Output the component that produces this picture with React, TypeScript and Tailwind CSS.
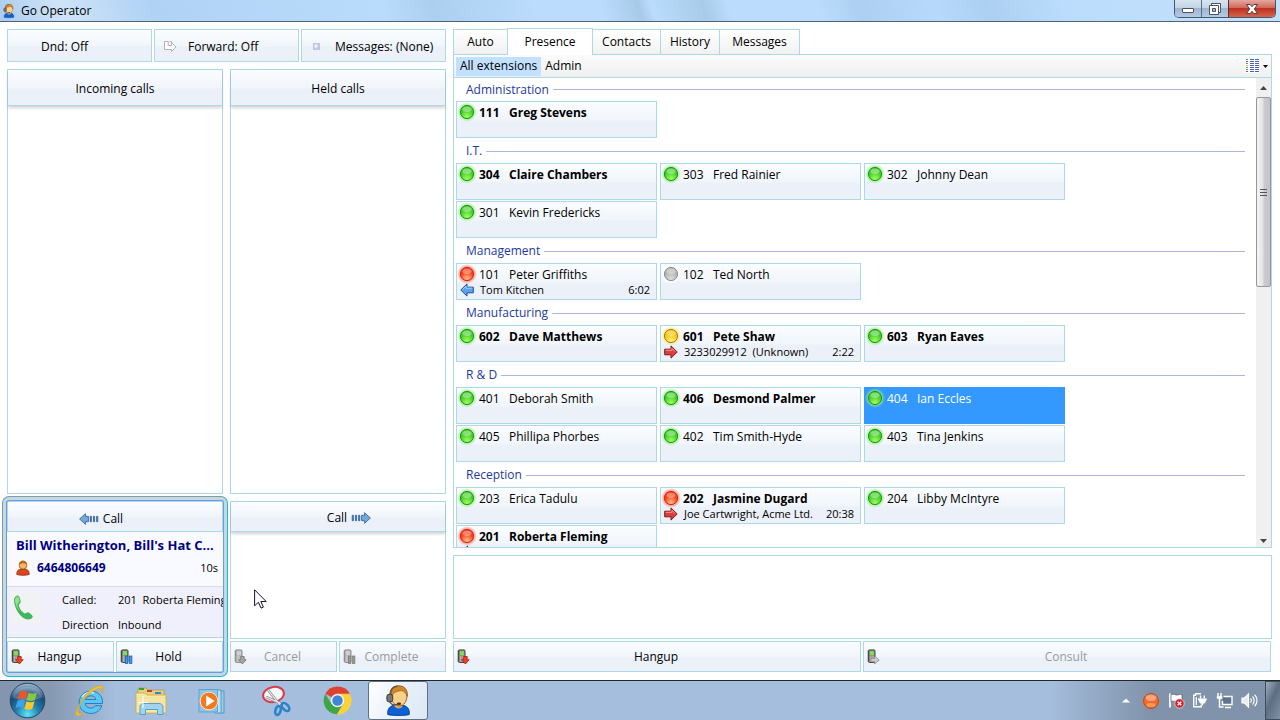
import { useId, useState, type ReactNode } from "react";

type Status = "green" | "red" | "yellow" | "grey";

interface CallInfo {
  direction: "in" | "out";
  party: string;
  time?: string;
}

interface Extension {
  ext: string;
  name: string;
  status: Status;
  bold?: boolean;
  call?: CallInfo;
}

interface Group {
  title: string;
  members: Extension[];
}

const groups: Group[] = [
  { title: "Administration", members: [{ ext: "111", name: "Greg Stevens", status: "green", bold: true }] },
  {
    title: "I.T.",
    members: [
      { ext: "304", name: "Claire Chambers", status: "green", bold: true },
      { ext: "303", name: "Fred Rainier", status: "green" },
      { ext: "302", name: "Johnny Dean", status: "green" },
      { ext: "301", name: "Kevin Fredericks", status: "green" },
    ],
  },
  {
    title: "Management",
    members: [
      { ext: "101", name: "Peter Griffiths", status: "red", call: { direction: "in", party: "Tom Kitchen", time: "6:02" } },
      { ext: "102", name: "Ted North", status: "grey" },
    ],
  },
  {
    title: "Manufacturing",
    members: [
      { ext: "602", name: "Dave Matthews", status: "green", bold: true },
      { ext: "601", name: "Pete Shaw", status: "yellow", bold: true, call: { direction: "out", party: "3233029912  (Unknown)", time: "2:22" } },
      { ext: "603", name: "Ryan Eaves", status: "green", bold: true },
    ],
  },
  {
    title: "R & D",
    members: [
      { ext: "401", name: "Deborah Smith", status: "green" },
      { ext: "406", name: "Desmond Palmer", status: "green", bold: true },
      { ext: "404", name: "Ian Eccles", status: "green" },
      { ext: "405", name: "Phillipa Phorbes", status: "green" },
      { ext: "402", name: "Tim Smith-Hyde", status: "green" },
      { ext: "403", name: "Tina Jenkins", status: "green" },
    ],
  },
  {
    title: "Reception",
    members: [
      { ext: "203", name: "Erica Tadulu", status: "green" },
      { ext: "202", name: "Jasmine Dugard", status: "red", bold: true, call: { direction: "out", party: "Joe Cartwright, Acme Ltd.", time: "20:38" } },
      { ext: "204", name: "Libby McIntyre", status: "green" },
      { ext: "201", name: "Roberta Fleming", status: "red", bold: true, call: { direction: "out", party: "" } },
    ],
  },
];

const tabs = [
  { label: "Auto", width: "w-[55px]" },
  { label: "Presence", width: "w-[86px]" },
  { label: "Contacts", width: "w-[69px]" },
  { label: "History", width: "w-[60px]" },
  { label: "Messages", width: "w-[81px]" },
];

const glass = "bg-[linear-gradient(#fbfdff,#f1f6fb_48%,#ebf0f9_58%,#ebf0f9)]";

const orbColors: Record<Status, { light: string; mid: string; dark: string; glow: string }> = {
  green: { light: "#9dff5e", mid: "#45cc2c", dark: "#2b8f1f", glow: "#8ef07c" },
  red: { light: "#ffc08a", mid: "#f8401c", dark: "#cc2c16", glow: "#ff7a6c" },
  yellow: { light: "#fff08a", mid: "#fbc50a", dark: "#a87c0c", glow: "#ffe680" },
  grey: { light: "#dcdcdc", mid: "#b4b4b4", dark: "#8c8c8c", glow: "#ffffff" },
};

function Orb({ status }: { status: Status }) {
  const id = useId();
  const c = orbColors[status];
  return (
    <svg viewBox="0 0 20 20" className="size-5 shrink-0" aria-hidden="true">
      <defs>
        <radialGradient id={`${id}g`}>
          <stop offset="60%" stopColor={c.glow} />
          <stop offset="100%" stopColor={c.glow} stopOpacity="0" />
        </radialGradient>
        <radialGradient id={`${id}b`} cx="50%" cy="85%" r="70%">
          <stop offset="0" stopColor={c.light} />
          <stop offset="75%" stopColor={c.mid} />
          <stop offset="100%" stopColor={c.mid} />
        </radialGradient>
      </defs>
      <circle cx="10" cy="10" r="10" fill={`url(#${id}g)`} />
      <circle cx="10" cy="10" r="6.6" fill={`url(#${id}b)`} stroke={c.dark} />
      <ellipse cx="10" cy="7.3" rx="4.4" ry="2.6" fill="#fff" opacity=".36" />
    </svg>
  );
}

function CallArrow({ direction }: { direction: "in" | "out" }) {
  return direction === "in" ? (
    <svg viewBox="0 0 14 14" className="size-3.5 shrink-0" aria-hidden="true">
      <path d="M.8 7 7 .9v3.300h6.300v5.600H7v3.300z" fill="#58a2ee" stroke="#1d4f9c" />
      <path d="M2.600 6.700 6 3.200v2h6.300" fill="none" stroke="#a9d2fb" />
    </svg>
  ) : (
    <svg viewBox="0 0 14 14" className="size-3.5 shrink-0" aria-hidden="true">
      <path d="M13.200 7 7 .9v3.300H.7v5.600H7v3.300z" fill="#e03c3c" stroke="#7c1c1c" />
      <path d="M11.300 6.700 8 3.300v2H1.700" fill="none" stroke="#f59a92" />
    </svg>
  );
}

function StripedArrow({ left }: { left?: boolean }) {
  return (
    <svg viewBox="0 0 20 12" className="h-3 w-5" aria-hidden="true">
      <g transform={left ? undefined : "matrix(-1 0 0 1 20 0)"} fill="#4f86bf" stroke="#2f5f9b" strokeWidth=".8">
        <path d="M.6 6 6.400.7v2.600h3v5.400h-3v2.600z" fill="#74a6d8" />
        <path d="M11.200 3.300h1.200v5.400h-1.200zM14.400 3.300h1.200v5.400h-1.200zM17.600 3.300h1.200v5.400h-1.200z" />
      </g>
    </svg>
  );
}

type PhoneKind = "hangup" | "hold" | "consult";

function PhoneIcon({ kind, muted }: { kind: PhoneKind; muted?: boolean }) {
  const body = muted ? "#8d8d8d" : "#444";
  const screen = muted ? "#d0d0d0" : "#7ee04e";
  return (
    <svg viewBox="0 0 14 16" className="h-4 w-3.5 shrink-0" aria-hidden="true">
      <path d="M.6 1.500 2.300.6v13L.6 12.800z" fill={muted ? "#aaa" : "#777"} />
      <rect x="1.600" y=".9" width="6.400" height="12.600" rx="1" fill={muted ? "#b5b5b5" : "#8b8b8b"} stroke={body} />
      <rect x="3" y="2.200" width="4" height="4" fill={screen} />
      <path d="M3 8h4M3 10h4M3 12h4" stroke={muted ? "#ddd" : "#d5d5d5"} strokeDasharray="1 .6" />
      {kind === "hangup" && (
        <path d="M6.600 7.500h3.600v3.200h2l-3.800 4.300-3.800-4.300h2z" fill={muted ? "#a5a5a5" : "#f0431c"} stroke={muted ? "#777" : "#a81a0e"} strokeWidth=".8" />
      )}
      {kind === "hold" && (
        <g fill={muted ? "#999" : "#3d9af0"} stroke={muted ? "#777" : "#155aa8"} strokeWidth=".7">
          <rect x="5.500" y="7" width="2.400" height="7.600" />
          <rect x="9.500" y="7" width="2.400" height="7.600" />
        </g>
      )}
      {kind === "consult" && <path d="M4 9.300h3.600V7l4.600 4-4.600 4v-2.300H4z" fill="#ccc" stroke="#8a8a8a" strokeWidth=".8" />}
    </svg>
  );
}

function OperatorIcon({ className }: { className: string }) {
  return (
    <svg viewBox="0 0 32 32" className={className} aria-hidden="true">
      <path d="M5 30.500c-.8-6 2.500-9 7-9.500h8c4.500.5 7.800 3.500 7 9.500-4 1.200-18 1.200-22 0z" fill="#0a62d6" stroke="#06378a" />
      <path d="M12 19h8v3c-2 3-6 3-8 0z" fill="#e9a558" />
      <path d="M7.500 11C7 4 11 1.200 16 1.200S25.500 4 24.700 12c-.3 5-3.200 9.500-7.700 9.500S8 17 7.500 11z" fill="#fbd08a" stroke="#9c5d15" />
      <path d="M7.200 12C6 4 11 .8 16 .8s10 3 9 11c-1.500-4-3-5.500-6-6-4 .5-8 1-10 6.200z" fill="#cf8728" stroke="#8c5410" strokeWidth=".7" />
      <path d="M8 9C8 3 12 1.500 15 1.200" fill="none" stroke="#555" strokeWidth="1.400" />
      <rect x="4" y="9.500" width="6" height="8" rx="2.500" fill="#777" stroke="#333" />
      <path d="M7 17c1 3 4 4 8 3" fill="none" stroke="#555" strokeWidth="1.200" />
      <ellipse cx="16.500" cy="19.300" rx="2.200" ry="1.300" fill="#333" />
    </svg>
  );
}

function PersonIcon() {
  return (
    <svg viewBox="0 0 14 16" className="h-4 w-3.5 shrink-0" aria-hidden="true">
      <path d="M.8 14.500c0-4 2-5.300 4.200-5.500h4c2.200.2 4.200 1.500 4.200 5.500-3 1-9.400 1-12.400 0z" fill="#d8471b" stroke="#962a0c" strokeWidth=".8" />
      <circle cx="7" cy="5.200" r="3.900" fill="#f4b660" stroke="#a85d14" strokeWidth=".8" />
      <path d="M3 5c0-6 8-6 8 0-2-2-5-2.400-8 0z" fill="#b96a1c" />
    </svg>
  );
}

function GlassButton({ children, icon, muted }: { children: ReactNode; icon?: ReactNode; muted?: boolean }) {
  return (
    <button
      type="button"
      disabled={muted}
      className={`${glass} flex h-[31px] items-center border border-[#add8e6] px-[3px] ${muted ? "text-[#9a9a9a]" : "text-black"}`}
    >
      {icon}
      <span className="flex-1 pr-4 text-center">{children}</span>
    </button>
  );
}

function ColumnPanel({ title, className = "", headerClass = "h-9" }: { title: ReactNode; className?: string; headerClass?: string }) {
  return (
    <section className={`flex flex-col border border-[#add8e6] bg-white ${className}`}>
      <h2 className={`${glass} ${headerClass} flex shrink-0 items-center justify-center border-b border-[#add8e6] pt-0.5 shadow-[0_2px_3px_rgba(0,0,0,0.18)]`}>{title}</h2>
    </section>
  );
}

function ExtensionCard({ item, selected, onSelect }: { item: Extension; selected: boolean; onSelect: () => void }) {
  return (
    <button
      type="button"
      aria-pressed={selected}
      onClick={onSelect}
      className={`flex h-[37px] w-[201px] flex-col border text-left ${
        selected ? "border-[#3399ff] bg-[#3399ff] text-white" : `${glass} border-[#add8e6] text-black`
      }`}
    >
      <span className="flex h-5 w-full items-center">
        <Orb status={item.status} />
        <span className={`flex items-center pt-px pl-0.5 leading-4 ${item.bold ? "font-bold" : ""}`}>
          <span className="w-[30px]">{item.ext}</span>
          <span>{item.name}</span>
        </span>
      </span>
      {item.call && (
        <span className="-mt-0.5 flex h-[15px] w-full items-center pr-1.5 pl-[3px] text-[11px] leading-[15px]">
          <CallArrow direction={item.call.direction} />
          <span className="flex-1 pl-1.5 whitespace-pre">{item.call.party}</span>
          <span>{item.call.time}</span>
        </span>
      )}
    </button>
  );
}

function TitleBar() {
  return (
    <header className="flex h-[22px] shrink-0 items-start justify-between border-b border-[#52617a] bg-[linear-gradient(72deg,#a9cdf0_0%,#cfe3f7_5%,#b0d3f5_12%,#b9dbfc_30%,#accff0_34%,#bbdcfc_42%,#bbdcfc_47%,#a8cae9_50%,#bbdcfc_51%,#a8cbea_55%,#bbdcfc_57%,#bbdcfc_64%,#add0f2_67%,#b7dafc_73%,#acd0f2_77%,#bbdcfc_83%,#c4e1fb_100%)]">
      <div className="flex items-center gap-[5px] pt-[3px] pl-0.5">
        <OperatorIcon className="h-4 w-3.5" />
        <h1 className="leading-4">Go Operator</h1>
      </div>
      <div className="mr-1 flex h-[18px] overflow-hidden rounded-b-[5px] border border-t-0 border-[#46566c]">
        <button type="button" aria-label="Minimize" className="flex w-[27px] items-center justify-center border-r border-[#5d6e86] bg-[linear-gradient(#d8e6f3,#c3d4e6_45%,#9fb5cf_50%,#b4cbe6)]">
          <svg viewBox="0 0 14 14" className="mt-0.5 size-3.5"><rect x="1.500" y="5.500" width="11" height="4" rx=".5" fill="#fff" stroke="#4a5264" /></svg>
        </button>
        <button type="button" aria-label="Restore" className="flex w-[27px] items-center justify-center border-r border-[#5d2a30] bg-[linear-gradient(#d8e6f3,#c3d4e6_45%,#9fb5cf_50%,#b4cbe6)]">
          <svg viewBox="0 0 14 14" className="size-3.5" fill="#fff" stroke="#4a5264">
            <path d="M3.500 1.500h9v9h-9z" />
            <path d="M1.500 3.500h9v9h-9z" />
            <path d="M4.500 6.500h3v3h-3z" fill="#a9bdd4" />
          </svg>
        </button>
        <button type="button" aria-label="Close" className="flex w-[46px] items-center justify-center bg-[linear-gradient(#e3a9a0,#d2695a_45%,#bd3220_50%,#d5644a)]">
          <svg viewBox="0 0 14 14" className="size-3.5"><path d="M1.500 2.500h3.700L7 4.700l1.800-2.200h3.700L9.300 7l3.200 4.500H8.800L7 9.300l-1.800 2.200H1.500L4.700 7z" fill="#fff" stroke="#5a3a44" /></svg>
        </button>
      </div>
    </header>
  );
}

function ActiveCall() {
  return (
    <section className="relative flex flex-1 flex-col bg-white">
      <h2 className={`${glass} flex h-[30px] shrink-0 items-center justify-center gap-1 border border-b-0 border-[#add8e6] pt-1 pr-7`}>
        <StripedArrow left />
        Call
      </h2>
      <div className="border-y border-[#add8e6] border-b-[#d9dde4] bg-[#f8faff] px-[9px]">
        <p className="h-[27px] text-[13px] leading-[27px] font-bold whitespace-nowrap text-[#000080]">Bill Witherington, Bill's Hat C...</p>
        <div className="-mr-1 flex h-[27px] items-start pt-px">
          <PersonIcon />
          <span className="flex-1 pl-[7px] leading-4 font-bold text-[#000080]">6464806649</span>
          <span className="text-[11px] leading-4">10s</span>
        </div>
      </div>
      <div className="mb-[3px] flex h-[51px] overflow-hidden border-b border-[#add8e6] bg-[#f0f0fc] text-[11px]">
        <svg viewBox="0 0 30 32" className="mt-1 ml-1 h-8 w-[30px] shrink-0" aria-hidden="true">
          <rect width="30" height="32" fill="#f1f2f4" />
          <path d="M3 9c0-2.500 2-4.500 4-4.500 1.500.5 2.500 4 2.700 6.500-.2 1.500-1.700 1.800-2 3 .6 3.500 3 7 6 8.500 1.200.2 2-1.300 3.300-1.300 1.700.6 4.500 3 4.800 4.300-.4 2-3 3.300-5.300 3C9.500 27.500 3 17 3 9z" fill="#43b55c" />
          <path d="M4 9c.3-2 1.500-3.500 3-3.400 1 .8 1.500 3 1.600 5L6.500 13C6 15 8 19 10 21 6.500 18 4 13 4 9z" fill="#8fe38c" />
        </svg>
        <dl className="grid flex-1 auto-rows-[25px] grid-cols-[56px_1fr] pl-[21px] leading-[25px] whitespace-pre">
          <dt>Called:</dt>
          <dd>201  Roberta Fleming</dd>
          <dt>Direction</dt>
          <dd>Inbound</dd>
        </dl>
      </div>
      <div className="mt-auto grid grid-cols-2 gap-0.5">
        <GlassButton icon={<PhoneIcon kind="hangup" />}>Hangup</GlassButton>
        <GlassButton icon={<PhoneIcon kind="hold" />}>Hold</GlassButton>
      </div>
      <div className="pointer-events-none absolute -inset-[5px] rounded-[7px] border border-[#7f9cab] border-r-[#12bfd6] border-b-[#12bfd6] shadow-[inset_0_0_0_3px_#c4d8e2,inset_0_0_0_4px_#6b9ae6]" />
    </section>
  );
}

function TaskbarIcons() {
  return (
    <nav aria-label="Taskbar" className="flex h-full items-center">
      <button type="button" aria-label="Start" className="flex w-[54px] justify-center">
        <svg viewBox="0 0 38 38" className="size-[37px]">
          <defs>
            <radialGradient id="start-orb" cx="50%" cy="90%" r="85%">
              <stop offset="0" stopColor="#5fe6f5" />
              <stop offset=".4" stopColor="#1f7fae" />
              <stop offset=".75" stopColor="#1c4a73" />
              <stop offset="1" stopColor="#8fb0c9" />
            </radialGradient>
          </defs>
          <circle cx="19" cy="19" r="17.800" fill="url(#start-orb)" stroke="#27435f" />
          <path d="M4 16C6 1 32 1 34 16c-10 4-20 4-30 0z" fill="#fff" opacity=".22" />
          <path d="M11 10.500c2.500-1.600 5-1.500 8 0l-2 7.500c-3-1.400-5.500-1.400-8 0z" fill="#f0552a" />
          <path d="M20.200 11c3 1.500 5.500 1.500 8.500 0l-2.200 7.600c-3 1.400-5.500 1.400-8.300 0z" fill="#8cc63f" />
          <path d="M8.700 19.300c2.500-1.500 5-1.500 8 0l-2 7.500c-3-1.500-5.500-1.500-8 0z" fill="#3ba3e8" />
          <path d="M17.900 19.800c3 1.500 5.500 1.500 8.400 0L24 27.400c-3 1.400-5.300 1.400-8.200 0z" fill="#fcc62d" />
        </svg>
      </button>
      <a href="#internet-explorer" aria-label="Internet Explorer" className="flex w-[72px] justify-center">
        <svg viewBox="0 0 32 32" className="size-8">
          <path d="M28.500 18.500H11.200c.4 5.200 7.800 6 10 2.200h6.700C25.500 27.500 19 29.600 13.500 28 8 26.500 5 22 5.200 17 5.500 10.500 10.500 6.200 17 6.200c7.500 0 12 5 11.500 12.300zM11.400 14.500h10.500c-.7-4.800-9-5-10.500 0z" fill="#5cc6f5" stroke="#1a79bd" strokeWidth=".9" />
          <path d="M8 12c3-4.500 8-5.500 12-4" fill="none" stroke="#c5eeff" strokeWidth="1.600" />
          <path d="M5.500 20C.5 27 .8 32 6 30.400c1.500-.5 3-1.500 4.500-2.600-4 2.200-7.500 2-6.500-3C6 16 17 5.500 25 3.200c3.200-.8 4 1.400 2.600 5.300C30.500 3.500 29.500.4 25 1 18 2 9 11 5.500 20z" fill="#f6c52c" stroke="#e0a81a" strokeWidth=".8" />
        </svg>
      </a>
      <a href="#explorer" aria-label="Windows Explorer" className="flex w-[50px] justify-center">
        <svg viewBox="0 0 34 32" className="h-8 w-[34px]">
          <path d="M4 3h8l2 2h16v20H4z" fill="#e9cf7b" stroke="#b9993f" strokeWidth=".8" />
          <path d="M5 3h5v2H5z" fill="#2da23a" /><path d="M13 5h5v2h-5z" fill="#d33a23" /><path d="M21 7h6v2h-6z" fill="#2e86d9" />
          <path d="M2 8h9l2 2h19v18H2z" fill="#f7e7a5" stroke="#c7aa50" strokeWidth=".8" />
          <path d="M3 13h28M3 17h28M3 21h28" stroke="#f0dc98" />
          <path d="M6 29.500v-7c0-3 2-4 4-4h15c2.500 0 4 1.500 4 4v7h-5.500v-5h-12v5z" fill="#9fd4ee" stroke="#5a9fc6" />
          <path d="M9 11v12M4 17.500h10" stroke="#fff" />
        </svg>
      </a>
      <a href="#media-player" aria-label="Media Player" className="flex w-[72px] justify-center">
        <svg viewBox="0 0 30 28" className="h-7 w-[30px]">
          <path d="M21 4h6v22h-6z" fill="#9ccbe6" stroke="#4d9cc9" />
          <path d="M18 3h6v23h-6z" fill="#bfe0f1" stroke="#4d9cc9" />
          <rect x="2" y="2.500" width="18.500" height="22.500" fill="#8fc4e4" stroke="#5aa5cf" />
          <circle cx="12" cy="14" r="8.900" fill="#f47a20" stroke="#fde3c8" />
          <path d="M9.200 8.500 17.500 14l-8.300 5.500z" fill="#fff" />
        </svg>
      </a>
      <a href="#snipping-tool" aria-label="Snipping Tool" className="flex w-[55px] justify-center">
        <svg viewBox="0 0 32 32" className="size-8">
          <ellipse cx="13.500" cy="9.500" rx="10.500" ry="7.500" fill="#f8f8fa" stroke="#d83c46" strokeWidth="2" transform="rotate(-12 13.500 9.500)" />
          <path d="M8 5l12 15M6 12l16 7" stroke="#8a9099" strokeWidth="2.600" />
          <path d="M8 5l12 15M6 12l16 7" stroke="#e8ecf0" strokeWidth="1.200" />
          <ellipse cx="18" cy="25.500" rx="2.600" ry="4.500" fill="none" stroke="#2d83c9" strokeWidth="2.600" transform="rotate(15 18 25.500)" />
          <ellipse cx="25.500" cy="22" rx="4.800" ry="2.800" fill="none" stroke="#2d83c9" strokeWidth="2.600" transform="rotate(48 25.500 22)" />
        </svg>
      </a>
      <a href="#chrome" aria-label="Chrome" className="flex w-[68px] justify-center">
        <svg viewBox="0 0 32 32" className="size-[31px]">
          <path d="M16 16 3.500 9A14.300 14.300 0 0 1 28.600 9z" fill="#dd4132" />
          <path d="M16 16V9h12.600A14.300 14.300 0 0 1 15 30.300l7-11z" fill="#fdd238" />
          <path d="M16 16l5.800 3.500L15.300 30.300A14.300 14.300 0 0 1 3.500 9l6.500 10.800z" fill="#3fa648" />
          <circle cx="16" cy="16" r="6.900" fill="#f6f6f6" />
          <circle cx="16" cy="16" r="5.400" fill="#3e86d6" />
        </svg>
      </a>
      <a href="#go-operator" aria-label="Go Operator" className="-ml-[3px] flex h-[39px] w-[60px] items-center justify-center rounded-[3px] border border-[#5e7085] bg-[linear-gradient(115deg,#ffffff,#e9f1fa_50%,#dce8f5)]">
        <OperatorIcon className="size-[31px]" />
      </a>
    </nav>
  );
}

function Tray() {
  return (
    <div className="flex h-full items-center">
      <svg viewBox="0 0 8 5" className="mr-3 h-[5px] w-2" aria-hidden="true"><path d="M0 4.500 4 .5l4 4z" fill="#fff" /></svg>
      <svg viewBox="0 0 18 18" className="mr-2 size-[18px]" aria-hidden="true">
        <circle cx="9" cy="9" r="7.500" fill="#f26a2c" stroke="#c04a1a" />
        <ellipse cx="9" cy="5.800" rx="5.400" ry="3.300" fill="#fff" opacity=".4" />
        <ellipse cx="9" cy="13" rx="4.500" ry="2" fill="#ffb36b" opacity=".7" />
      </svg>
      <svg viewBox="0 0 17 17" className="mr-1.5 size-[17px]" aria-hidden="true">
        <path d="M2 1.500v14" stroke="#fff" strokeWidth="1.800" />
        <path d="M3 2.500c3-1 4 .5 6 .5s3-1 5-.5v7c-2-.5-3 .5-5 .5s-3-1.500-6-.5z" fill="#fff" stroke="#4a5768" strokeWidth=".7" />
        <circle cx="11.500" cy="11.500" r="4.700" fill="#d9202a" stroke="#fff" strokeWidth=".6" />
        <path d="m9.700 9.700 3.600 3.600m0-3.600-3.600 3.600" stroke="#fff" strokeWidth="1.400" />
      </svg>
      <svg viewBox="0 0 17 17" className="mr-2 size-[17px]" fill="none" stroke="#fff" strokeWidth="1.400" aria-hidden="true">
        <path d="M10 1.700H4.500v1.500H2.700v11.600h7.500v-2" />
        <path d="M5.300 5v8" strokeWidth="1.200" />
        <path d="M9.500 3.500v3M13.300 3.500v3" />
        <path d="M7 6.500h8.800v1.700h-.9c0 2.400-1.200 3.300-2.700 3.600v1.500h-1.600v-1.500C9.100 11.500 7.900 10.600 7.900 8.200H7z" fill="#fff" stroke="none" />
      </svg>
      <svg viewBox="0 0 18 17" className="mr-[7px] h-[17px] w-[18px]" fill="none" stroke="#fff" strokeWidth="1.400" aria-hidden="true">
        <path d="M7.500 4.500H16v8H6.500V9" fill="#5f738c" />
        <path d="M9 15.500h6M2 1v3.500M5 1v3.500M3.500 7v8h4" />
        <path d="M1 4.300h5v2.200H4.500L3.500 8l-1-1.500H1z" fill="#fff" strokeWidth=".5" />
      </svg>
      <svg viewBox="0 0 17 17" className="mr-[7px] size-[17px]" fill="none" stroke="#fff" strokeWidth="1.200" aria-hidden="true">
        <path d="M1 6h2.500l4-4v13l-4-4H1z" fill="#e8edf2" />
        <path d="M9.500 6.500c1 1 1 3 0 4M11.500 4.500c2.200 2 2.200 6 0 8M13.600 2.800c3.200 3 3.200 8.400 0 11.400" />
      </svg>
      <button type="button" aria-label="Show desktop" className="h-full w-[15px] border border-r-0 border-[#3f4c5d] bg-[linear-gradient(115deg,#9eacbc,#5d6d82_45%,#7f92a8)]" />
    </div>
  );
}

export default function App() {
  const [tab, setTab] = useState("Presence");
  const [selected, setSelected] = useState("404");

  return (
    <div className="flex h-screen min-w-[900px] flex-col overflow-hidden bg-white font-['Open_Sans','Noto_Sans',sans-serif] text-[12px] text-black">
      <TitleBar />

      <main className="flex min-h-0 flex-1 gap-[7px] pt-[7px] pr-2 pb-2 pl-[7px]">
        <div className="flex w-[439px] shrink-0 flex-col gap-[7px]">
          <div className="grid grid-cols-3 gap-0.5">
            <button type="button" className={`${glass} h-[33px] border border-[#add8e6] pt-0.5 pl-[33px] text-left`}>Dnd: Off</button>
            <button type="button" className={`${glass} flex h-[33px] items-center gap-[11px] border border-[#add8e6] pt-0.5 pl-[9px]`}>
              <svg viewBox="0 0 13 13" className="size-[13px]" fill="#fff" stroke="#b3b3b3" aria-hidden="true">
                <path d="M.5 1.500h3.700v4h3.300V2.500L12 7l-4.500 4.500v-2h-7z" />
                <path d="M5.500 1.500h2v3" fill="none" />
              </svg>
              Forward: Off
            </button>
            <button type="button" className={`${glass} flex h-[33px] items-center border border-[#add8e6] pt-0.5 pl-[11px] whitespace-nowrap`}>
              <svg viewBox="0 0 7 7" className="mr-[15px] size-[7px]" aria-hidden="true">
                <rect x=".5" y=".5" width="6" height="6" fill="#c7c7e6" stroke="#c1c1e0" />
                <rect x="1.500" y="1.500" width="3" height="3" fill="#f2f2fd" />
              </svg>
              Messages: (None)
            </button>
          </div>

          <div className="grid min-h-0 flex-1 grid-cols-2 gap-[7px]">
            <ColumnPanel title="Incoming calls" />
            <ColumnPanel title="Held calls" />
          </div>

          <div className="grid h-[171px] shrink-0 grid-cols-2 gap-[7px]">
            <ActiveCall />
            <div className="relative flex flex-col gap-0.5">
              <ColumnPanel className="flex-1" headerClass="h-[30px]" title={<span className="flex items-center gap-1 pl-[22px]">Call <StripedArrow /></span>} />
              <div className="grid grid-cols-2 gap-0.5">
                <GlassButton muted icon={<PhoneIcon kind="hangup" muted />}>Cancel</GlassButton>
                <GlassButton muted icon={<PhoneIcon kind="hold" muted />}>Complete</GlassButton>
              </div>
              <svg viewBox="0 0 13 20" className="pointer-events-none absolute top-[88px] left-6 h-5 w-[13px]" aria-hidden="true">
                <path d="M.6.800v16l3.800-3.500 2.600 5.800 2.400-1-2.600-5.600h5.400z" fill="#fff" stroke="#14142c" />
              </svg>
            </div>
          </div>
        </div>

        <div className="flex min-w-0 flex-1 flex-col">
          <div role="tablist" className="-mt-px flex h-[26px] shrink-0 items-end pr-px">
            {tabs.map((t) => (
              <button
                key={t.label}
                type="button"
                role="tab"
                aria-selected={tab === t.label}
                onClick={() => setTab(t.label)}
                className={`${t.width} -mr-px border border-[#add8e6] ${
                  tab === t.label ? "z-10 -mb-px h-[27px] border-b-0 bg-white" : "h-[25px] border-b-0 bg-[linear-gradient(#ffffff,#f1f1f1)]"
                }`}
              >
                {t.label}
              </button>
            ))}
          </div>

          <section className="flex min-h-0 flex-1 flex-col border border-[#add8e6]">
            <div className="flex h-[23px] shrink-0 items-center justify-between border-b border-[#add8e6] bg-[linear-gradient(#fbfbfb,#f0f0f0)] pr-[3px] pl-0.5">
              <div className="flex">
                <button type="button" className="h-[19px] bg-[#c2e0ff] px-1">All extensions</button>
                <button type="button" className="h-[19px] px-1">Admin</button>
              </div>
              <button type="button" aria-label="View" className="flex items-center gap-1">
                <svg viewBox="0 0 14 14" className="size-3.5" shapeRendering="crispEdges" aria-hidden="true">
                  <rect width="14" height="14" fill="#fff" />
                  <path d="M5 .5h4m1 0h4M5 2.500h4m1 0h4M5 4.500h4m1 0h4M5 6.500h4m1 0h4M5 8.500h4m1 0h4M5 10.500h4m1 0h4M5 12.500h4m1 0h4" stroke="#4a5fb8" />
                  <path d="M1 .5h2M1 8.500h2" stroke="#55a860" /><path d="M1 2.500h2M1 12.500h2" stroke="#d43c3c" />
                  <path d="M1 4.500h2M1 10.500h2" stroke="#4a8fd8" /><path d="M1 6.500h2" stroke="#b9c832" />
                </svg>
                <svg viewBox="0 0 5 3" className="h-[3px] w-[5px]" aria-hidden="true"><path d="M0 0h5L2.500 3z" fill="#000" /></svg>
              </button>
            </div>

            <div className="flex min-h-0 flex-1">
              <div className="min-w-0 flex-1 overflow-y-auto pr-[11px] pl-0.5 [scrollbar-width:none]">
                {groups.map((g) => (
                  <section key={g.title} className="group">
                    <h3 className="flex h-6 items-center gap-1 pl-2.5 whitespace-nowrap text-[#1a3a9c] group-first:h-[23px] after:h-px after:flex-1 after:bg-[#aab8dc]">
                      {g.title}
                    </h3>
                    <div className="mb-px flex flex-wrap gap-x-[3px] gap-y-px">
                      {g.members.map((m) => (
                        <ExtensionCard key={m.ext} item={m} selected={selected === m.ext} onSelect={() => setSelected(m.ext)} />
                      ))}
                    </div>
                  </section>
                ))}
              </div>
              <div className="flex w-[15px] flex-col items-center bg-[#f0f0f0]" aria-hidden="true">
                <svg viewBox="0 0 7 4" className="mt-2 mb-[7px] h-1 w-[7px] shrink-0"><path d="M0 4 3.500 0 7 4z" fill="#444" /></svg>
                <div className="flex h-[190px] w-full shrink-0 flex-col items-center justify-center gap-0.5 rounded-[2px] border border-[#979797] bg-[linear-gradient(90deg,#f5f5f5,#e3e3e5_45%,#cbcbcf_55%,#c4c4c8)]">
                  <span className="h-px w-[7px] bg-[#555]" />
                  <span className="h-px w-[7px] bg-[#555]" />
                  <span className="h-px w-[7px] bg-[#555]" />
                </div>
                <svg viewBox="0 0 7 4" className="mt-auto mb-1 h-1 w-[7px] shrink-0"><path d="M0 0h7L3.500 4z" fill="#444" /></svg>
              </div>
            </div>
          </section>

          <section aria-label="Call notes" className="mt-[7px] h-[84px] shrink-0 border border-[#add8e6]" />
          <div className="mt-0.5 mr-px grid grid-cols-2 gap-0.5">
            <GlassButton icon={<PhoneIcon kind="hangup" />}>Hangup</GlassButton>
            <GlassButton muted icon={<PhoneIcon kind="consult" />}>Consult</GlassButton>
          </div>
        </div>
      </main>

      <footer className="flex h-10 shrink-0 items-center justify-between border-t border-[#22272e] bg-[linear-gradient(90deg,#8496af_0,#8799b2_4%,#a5bedd_9%,#a5bedd_82%,#8da2bd_87%,#8193aa_90%,#8193aa)]">
        <TaskbarIcons />
        <Tray />
      </footer>
    </div>
  );
}
